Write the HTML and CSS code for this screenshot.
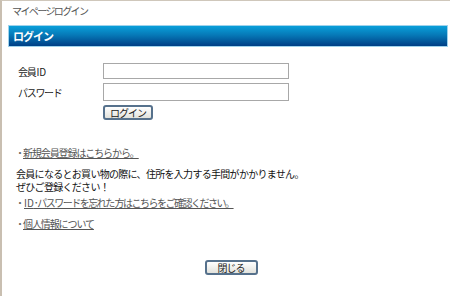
FILE: index.html
```html
<!DOCTYPE html>
<html lang="ja">
  <head>
    <meta charset="UTF-8" />
    <title>マイページログイン</title>
    <link rel="stylesheet" href="styles.css">
  </head>

  <body>
    <div class="page">
      <p class="page-title">マイページログイン</p>

      <h1 class="bar">ログイン</h1>

      <form class="login-form">
        <div class="row">
          <label for="member-id">会員<span class="latin">ID</span></label>
          <input type="text" id="member-id" name="member_id" />
        </div>
        <div class="row">
          <label for="password">パスワード</label>
          <input type="password" id="password" name="password" />
        </div>
        <div class="row">
          <span class="spacer"></span>
          <button type="submit" class="btn">ログイン</button>
        </div>
      </form>

      <ul class="links first">
        <li><a href="#">新規会員登録はこちらから。</a></li>
      </ul>
      <p class="note">会員になるとお買い物の際に、住所を入力する手間がかかりません。<br>ぜひご登録ください！</p>
      <ul class="links">
        <li class="forgot"><a href="#"><span class="latin">ID</span>･パスワードを忘れた 方はこちらをご確認ください。</a></li>
        <li><a href="#">個人情報について</a></li>
      </ul>

      <div class="close">
        <button type="button" class="btn">閉じる</button>
      </div>
    </div>
  </body>
</html>
```

FILE: styles.css
```css
html,
body {
  margin: 0;
  padding: 0;
  height: 100%;
}

body {
  font-family: "Noto Sans CJK JP", "Liberation Sans", sans-serif;
  font-size: 10px;
  color: #222;
  background-color: #fff;
}

.page {
  box-sizing: border-box;
  height: 296px;
  border-top: 1px solid #cfc7bb;
  border-left: 2px solid #c9bfb1;
  padding: 3px 6px 0 6px;
}

.page-title {
  margin: 0 0 0 4px;
  color: #555;
  font-size: 10px;
  line-height: 14px;
  letter-spacing: -1.6px;
}

.bar {
  margin: 7px 0 0 0;
  height: 20px;
  border: 1px solid #9fd3ec;
  background: linear-gradient(to bottom, #0a9fda 0%, #0679b7 45%, #003f86 100%);
  color: #fff;
  font-size: 11px;
  font-weight: bold;
  line-height: 20px;
  letter-spacing: -1px;
  padding-left: 4px;
  width: 434px;
}

.latin {
  letter-spacing: 0;
  margin-left: 1px;
}

.login-form {
  margin: 16px 0 0 10px;
}

.row {
  display: flex;
  align-items: center;
  margin-bottom: 4px;
}

.row label,
.spacer {
  width: 85px;
  font-size: 10px;
  letter-spacing: -1.3px;
}

.row input {
  box-sizing: border-box;
  width: 186px;
  height: 16px;
  border: 1px solid #a8a8a8;
  padding: 1px 3px;
  margin: 0;
}

.row:nth-child(2) input {
  height: 18px;
}

.btn {
  font-family: "Noto Sans CJK JP", "Liberation Sans", sans-serif;
  font-size: 10px;
  line-height: 12px;
  letter-spacing: -1px;
  padding: 0 5px;
  height: 15px;
  border: 2px solid #56718c;
  border-radius: 3px;
  background: linear-gradient(to bottom, #ffffff, #e2e2dc);
  color: #222;
}

.links {
  list-style: none;
  margin: 0;
  padding: 0 0 0 8px;
  letter-spacing: -1.1px;
}

.links.first {
  margin-top: 26px;
}

.links li {
  line-height: 14px;
  margin-bottom: 7px;
}

.links li + li {
  margin-top: 1px;
}

.links li::before {
  content: "・";
  display: inline-block;
  width: 8px;
  margin-left: -1px;
  letter-spacing: 0;
  color: #666;
}

.links .forgot {
  letter-spacing: -1.5px;
}

.links a {
  color: #555;
  text-decoration: underline;
}

.note {
  margin: 0 0 3px 8px;
  line-height: 13px;
  font-size: 10px;
  letter-spacing: -0.7px;
  color: #111;
}

.close {
  text-align: center;
  margin-top: 29px;
  padding-left: 10px;
}

.close .btn {
  width: 53px;
}
```
